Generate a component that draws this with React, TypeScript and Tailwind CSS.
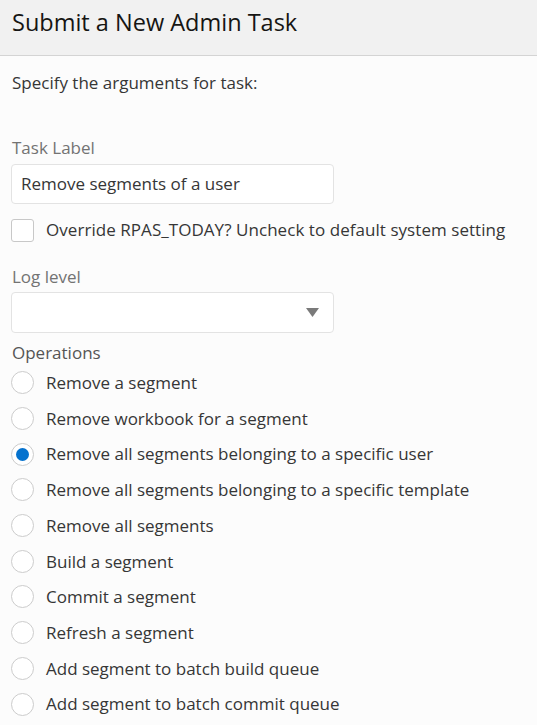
import React from 'react'

const operations = [
  'Remove a segment',
  'Remove workbook for a segment',
  'Remove all segments belonging to a specific user',
  'Remove all segments belonging to a specific template',
  'Remove all segments',
  'Build a segment',
  'Commit a segment',
  'Refresh a segment',
  'Add segment to batch build queue',
  'Add segment to batch commit queue',
]

export default function App() {
  const selected = 2

  return (
    <div className="min-h-[725px] bg-[#fcfcfc] text-[#363636] font-['Open_Sans',sans-serif]">
      <div className="h-[56px] bg-[#f1f1f1] border-b border-[#d4d4d4] px-[12px] flex items-center pb-[9px]">
        <h1 className="text-[23.5px] text-[#161513]">Submit a New Admin Task</h1>
      </div>

      <div className="px-[11px]">
        <p className="mt-[15px] text-[17px] leading-[24px] pl-[1px]">Specify the arguments for task:</p>

        <div className="mt-[41px] text-[17px] leading-[24px] text-[#737373] pl-[1px]">Task Label</div>
        <div className="mt-[4px] w-[323px] h-[40px] border border-[#e3e3e3] rounded-[4px] bg-white flex items-center px-[9px] text-[17px]">
          Remove segments of a user
        </div>

        <label className="mt-[14px] flex items-center h-[24px] gap-[12px]">
          <span className="w-[23px] h-[23px] border border-[#c8c8c8] rounded-[3px] bg-white" />
          <span className="text-[17px] tracking-[0.05px]">Override RPAS_TODAY? Uncheck to default system setting</span>
        </label>

        <div className="mt-[23px] text-[17px] leading-[24px] text-[#737373] pl-[1px]">Log level</div>
        <div className="mt-[3px] w-[323px] h-[41px] border border-[#e3e3e3] rounded-[4px] bg-white flex items-center justify-end pr-[14px]">
          <svg width="13" height="9" viewBox="0 0 13 9">
            <path d="M0 0 H13 L6.5 9 Z" fill="#7a7a7a" />
          </svg>
        </div>

        <div className="mt-[8px] text-[17px] leading-[24px] text-[#555555] pl-[1px]">Operations</div>
        <div className="flex flex-col">
          {operations.map((op, i) => (
            <div key={op} className="h-[35.7px] flex items-center gap-[12px]">
              <span className="w-[23px] h-[23px] rounded-full border-[1.5px] border-[#cccccc] bg-white flex items-center justify-center">
                {i === selected && <span className="w-[13px] h-[13px] rounded-full bg-[#0572ce]" />}
              </span>
              <span className="text-[17px]">{op}</span>
            </div>
          ))}
        </div>
      </div>
    </div>
  )
}
